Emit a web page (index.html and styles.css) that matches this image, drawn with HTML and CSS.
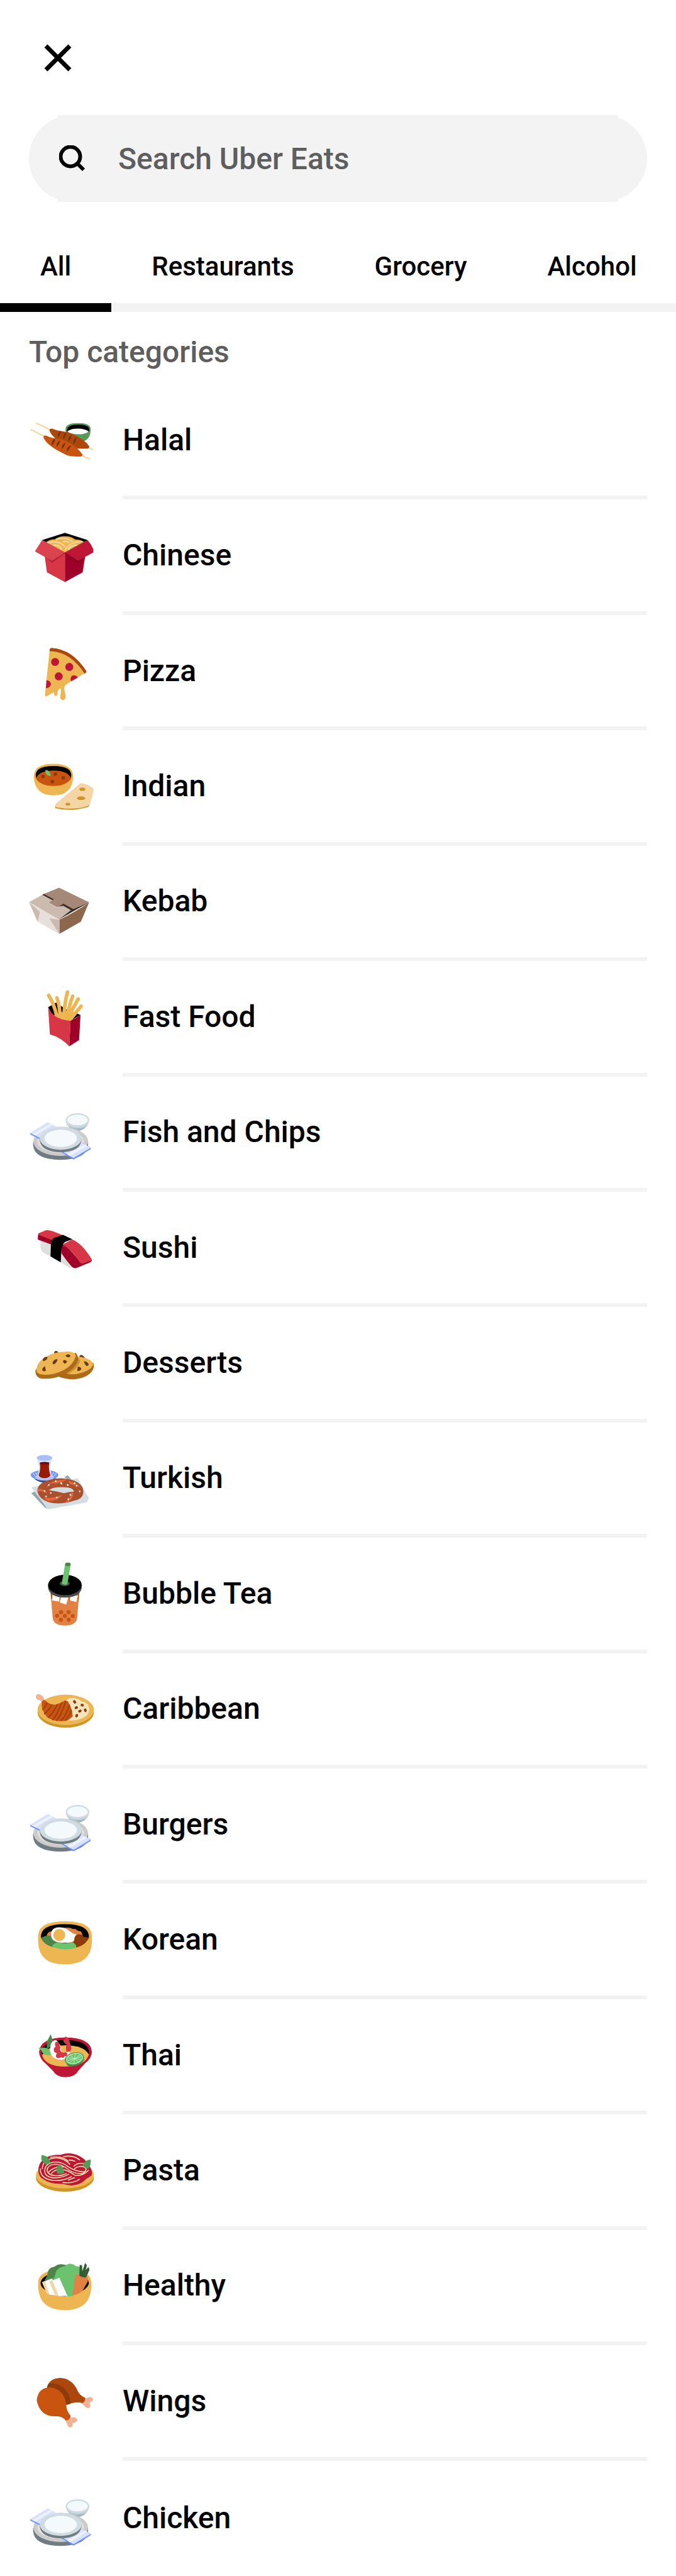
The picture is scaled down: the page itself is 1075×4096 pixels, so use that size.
FILE: index.html
```html
<!DOCTYPE html>
<html lang="en">
<head>
<meta charset="utf-8">
<meta name="viewport" content="width=device-width, initial-scale=1">
<title>Search Uber Eats</title>
<link rel="stylesheet" href="styles.css">
</head>
<body>
<svg class="sprite" aria-hidden="true">
  <symbol id="plate" viewBox="144 126 324 324">
    <path d="M332 232 Q334 262 367 278 Q386 284 405 278 Q440 262 444 232z" fill="#a3b7c1"/>
    <path d="M328 226 Q330 252 350 262 Q388 275 425 262 Q444 250 445 226z" fill="#c3d2d9"/>
    <ellipse cx="387" cy="226" rx="59" ry="34" fill="#d1dde3"/>
    <ellipse cx="387" cy="226" rx="51" ry="26" fill="#f4fafb"/>
    <path d="M165 335 V352 Q170 424 302 426 Q434 424 440 352 V335z" fill="#717c82"/>
    <ellipse cx="303" cy="333" rx="137" ry="73" fill="#cbcbcb"/>
    <ellipse cx="303" cy="333" rx="117" ry="58" fill="#e2dfde"/>
    <path d="M150 291 V298 L210 328 V318z" fill="#6d93fa"/>
    <path d="M150 291 L238 237 L300 270 L210 321z" fill="#d9e2fd"/>
    <path d="M163 297 L252 245 L263 251 L175 303z" fill="#eff2fe"/>
    <path d="M300 383 L367 424 L453 372 V364 L390 330z" fill="#6d93fa"/>
    <path d="M300 378 L367 416 L453 365 L400 335z" fill="#d9e2fd"/>
    <path d="M335 398 L424 348 L436 355 L350 407z" fill="#eff2fe"/>
    <path d="M198 318 V330 Q208 386 303 388 Q398 386 407 330 V318z" fill="#717c82"/>
    <ellipse cx="303" cy="318" rx="105" ry="57" fill="#d0dce2"/>
    <ellipse cx="303" cy="318" rx="81" ry="43" fill="#f4fafb"/>
  </symbol>
</svg>

<div class="page">
  <header class="topbar">
    <button class="close" type="button" aria-label="Close">
      <svg viewBox="0 0 46 46" aria-hidden="true"><path d="M4 4 L42 42 M42 4 L4 42" fill="none" stroke="#000" stroke-width="7"/></svg>
    </button>
  </header>

  <form class="search" role="search">
    <svg class="search-icon" viewBox="0 0 42 42" aria-hidden="true"><circle cx="18" cy="18" r="15.500" fill="none" stroke="#000" stroke-width="6"/><path d="M29 29 L39 39" stroke="#000" stroke-width="6"/></svg>
    <input class="search-input" type="search" placeholder="Search Uber Eats" aria-label="Search Uber Eats">
  </form>

  <nav class="tabs" role="tablist" aria-label="Search filters">
    <button class="tab tab-active" type="button" role="tab" aria-selected="true">All</button>
    <button class="tab" type="button" role="tab" aria-selected="false">Restaurants</button>
    <button class="tab" type="button" role="tab" aria-selected="false">Grocery</button>
    <button class="tab" type="button" role="tab" aria-selected="false">Alcohol</button>
  </nav>

  <h2 class="heading">Top categories</h2>

  <ul class="list">
    <li><a class="row" href="#halal">
      <svg class="icon" viewBox="144 114 324 324" aria-hidden="true">
        <path d="M327 222 Q327 192 390 192 Q453 192 453 222 Q453 287 390 287 Q327 287 327 222z" fill="#569a58"/>
        <path d="M333 234 Q333 199 389 199 Q446 199 446 226 L443 236z" fill="#000"/>
        <path d="M336 233 Q355 219 389 219 Q425 219 443 234 Q425 248 389 248 Q352 248 336 233z" fill="#fff"/>
        <path d="M181 192 L463 324 M155 225 L446 372" fill="none" stroke="#f9d6a0" stroke-width="7" stroke-linecap="round"/>
        <path d="M246 228 Q248 218 262 220 Q280 229 306 232 Q335 234 362 246 Q425 275 446 308 Q446 319 435 319 Q380 325 335 305 Q262 270 246 228z" fill="#ad480c"/>
        <path d="M216 262 Q219 252 232 255 Q250 265 280 269 Q318 272 350 293 Q385 310 412 349 Q411 359 400 359 Q355 360 335 353 Q230 305 216 262z" fill="#c95410"/>
        <g fill="#72330f">
          <path d="M308 233 Q284 236 289 265 Q297 254 308 233z"/><path d="M332 240 Q311 249 316 275 Q326 262 332 240z"/><path d="M359 251 Q337 261 341 286 Q353 274 359 251z"/><path d="M384 263 Q362 272 367 299 Q378 286 384 263z"/>
          <path d="M277 269 Q254 276 259 305 Q271 293 277 269z"/><path d="M302 278 Q278 285 283 311 Q295 299 302 278z"/><path d="M328 289 Q305 297 309 324 Q321 311 328 289z"/><path d="M355 303 Q330 310 334 336 Q346 325 355 303z"/>
        </g>
      </svg>
      <span class="label">Halal</span></a></li>

    <li><a class="row" href="#chinese">
      <svg class="icon" viewBox="144 690 324 324" aria-hidden="true">
        <path d="M210 774 L324 738 L438 774 L324 836z" fill="#000"/>
        <path d="M230 784 Q250 770 274 770 Q295 754 324 755 Q355 754 376 772 Q402 770 419 783 L324 836z" fill="#eeb653"/>
        <g fill="none" stroke="#f7d89d" stroke-width="7"><path d="M278 771 Q324 756 362 782 M236 790 Q290 770 325 808 M264 800 Q290 793 308 820 M314 782 Q335 778 346 788 M325 827 Q345 780 412 783 M341 824 Q350 800 385 799"/></g>
        <path d="M222 850 L324 836 V984 L234 935z" fill="#d63645"/>
        <path d="M426 850 L324 836 V984 L413 935z" fill="#9f0029"/>
        <path d="M224 856 L260 888 L324 840 V836z" fill="#af2236"/><path d="M425 856 L388 887 L324 840 V836z" fill="#800020"/>
        <path d="M210 774 L324 836 L259 878 L174 831z" fill="#dc4350"/>
        <path d="M438 774 L324 836 L389 878 L466 836 V820 Q456 795 438 774z" fill="#be1736"/>
      </svg>
      <span class="label">Chinese</span></a></li>

    <li><a class="row" href="#pizza">
      <svg class="icon" viewBox="144 126 324 324" aria-hidden="true">
        <path d="M247 188 Q350 190 420 302 L330 357 Q320 364 321 378 Q322 392 327 408 Q330 434 314 435 Q299 434 301 412 Q305 395 304 379 Q299 371 288 390 Q287 400 287 408 Q283 415 276 414 Q269 412 269 398 Q266 397 262 399 L231 416 Q224 418 224 410z" fill="#eeb653"/>
        <path d="M247 190 L248 181 Q249 174 258 174 Q362 181 432 291 Q433 296 422 303 Q350 192 247 190z" fill="#ad480c"/>
        <g fill="#be1736"><circle cx="275" cy="244" r="20"/><circle cx="346" cy="269" r="20"/><circle cx="293" cy="316" r="20"/><path d="M232 335 Q253 337 254 355 Q252 374 229 375z"/><path d="M356 341 Q346 324 361 312 Q378 308 389 322z"/></g>
      </svg>
      <span class="label">Pizza</span></a></li>

    <li><a class="row" href="#indian">
      <svg class="icon" viewBox="144 702 324 324" aria-hidden="true">
        <path d="M168 820 Q167 754 267 754 Q366 754 366 820 Q360 912 267 912 Q174 912 168 820z" fill="#eeb653"/>
        <path d="M180 825 Q165 765 267 765 Q369 765 354 825 Q340 860 267 860 Q194 860 180 825z" fill="#000"/>
        <path d="M180 825 Q197 788 267 788 Q337 788 354 825 Q335 865 267 865 Q199 865 180 825z" fill="#c95410"/>
        <g fill="#8e3b0c"><circle cx="214" cy="817" r="9"/><circle cx="276" cy="805" r="9"/><circle cx="316" cy="824" r="9"/><circle cx="261" cy="843" r="9"/></g>
        <path d="M225 786 Q248 782 253 813 Q230 820 225 786z" fill="#6cc36e"/>
        <path d="M275 962 V976 Q350 996 440 970 Q446 965 448 954z" fill="#cc9526"/>
        <path d="M402 851 Q435 852 468 879 Q464 915 448 957 Q438 970 390 976 Q325 982 276 969 V955z" fill="#f5d5a4"/>
        <g fill="#cc9526"><ellipse cx="411" cy="881" rx="15" ry="8"/><ellipse cx="405" cy="926" rx="21" ry="9"/><ellipse cx="339" cy="956" rx="12" ry="7"/></g>
      </svg>
      <span class="label">Indian</span></a></li>

    <li><a class="row" href="#kebab">
      <svg class="icon" viewBox="144 138 324 324" aria-hidden="true">
        <path d="M214 264 L295 231 L445 304 L362 338 L318 320 L285 328 L245 306 L255 290z" fill="#a58877"/>
        <path d="M145 303 L214 265 L265 292 L247 301 Q245 306 252 312 L285 329 L318 319 L357 341 L296 391z" fill="#cbbab0"/>
        <path d="M218 262 L268 288 L263 294 L212 267z M294 324 L317 311 L362 336 L370 339 L356 344 L316 321z" fill="#3c2c26"/>
        <path d="M296 389 L357 341 L445 304z" fill="#3c2c26"/>
        <path d="M296 391 Q375 354 445 304 L404 401 L296 462z" fill="#8c664d"/>
        <path d="M145 304 L296 391 V462 L185 399z" fill="#e7dfda"/>
        <path d="M145 304 L199 352 L188 400z M246 384 L296 391 V462z" fill="#cbbab0"/>
      </svg>
      <span class="label">Kebab</span></a></li>

    <li><a class="row" href="#fast-food">
      <svg class="icon" viewBox="144 714 324 324" aria-hidden="true">
        <path d="M240 829 L280 806 L330 840 L402 867 L352 897 L260 865z" fill="#000"/>
        <path d="M270 835 L290 872 L300 850 L322 858 L335 840 L386 860 Q372 880 354 898 Q310 898 278 870z" fill="#eeb653"/>
        <g fill="none" stroke="#eeb653" stroke-width="18" stroke-linecap="round"><path d="M243 770 Q270 810 285 880 M284 782 Q298 820 300 880 M337 753 Q322 805 319 880 M363 774 Q350 805 336 870 M390 788 L345 870 M405 824 L358 880"/></g>
        <path d="M240 829 Q265 890 352 897 L346 1025 Q305 980 249 965z" fill="#d63645"/>
        <path d="M352 897 Q376 886 402 867 L395 993 L346 1025z" fill="#9f0029"/>
      </svg>
      <span class="label">Fast Food</span></a></li>

    <li><a class="row" href="#fish-and-chips">
      <svg class="icon" aria-hidden="true"><use href="#plate"/></svg>
      <span class="label">Fish and Chips</span></a></li>

    <li><a class="row" href="#sushi">
      <svg class="icon" viewBox="144 726 324 324" aria-hidden="true">
        <g transform="scale(1.0714 1)">
          <path d="M188 850 L236 870 V932 Q188 915 188 885z M284 910 L300 915 L338 992 Q315 988 284 962z" fill="#dedede"/>
          <path d="M178 818 Q176 835 176 849 L242 875 L255 845z" fill="#9f0029"/>
          <path d="M178 818 L213 802 Q225 799 248 808 L298 829 L242 851 L181 826z" fill="#d63645"/>
          <path d="M286 880 L300 868 L382 968 L428 948 Q430 956 422 962 L356 991 Q343 994 335 985 Q310 955 286 917z" fill="#9f0029"/>
          <path d="M290 875 L336 848 Q385 870 428 948 Q427 953 420 956 L385 970 Q375 970 369 958 Q330 892 290 875z" fill="#d63645"/>
          <path d="M237 870 Q237 849 252 840 L294 825 L337 847 L305 860 Q287 870 285 915 L283 963 L235 933z" fill="#000"/>
        </g>
      </svg>
      <span class="label">Sushi</span></a></li>

    <li><a class="row" href="#desserts">
      <svg class="icon" viewBox="144 102 324 324" aria-hidden="true">
        <path d="M397 228 Q408 216 423 236 V250 H395z" fill="#6b3b0e"/>
        <path d="M468 264 V285 Q455 335 370 345 Q330 346 288 330 L380 235z" fill="#ad6b18"/>
        <path d="M385 231 Q450 236 466 268 Q458 302 385 318 Q345 323 310 312z" fill="#eeb653"/>
        <path d="M388 233 L400 248 Q397 280 360 306 Q325 332 300 332 L288 330z" fill="#a06a1b" opacity=".45"/>
        <path d="M271 207 Q280 197 292 210 L288 220 H270z" fill="#6b3b0e"/>
        <path d="M180 293 L176 305 Q178 335 205 341 Q260 346 310 326 Q385 290 391 240 Q388 222 378 212z" fill="#ad6b18"/>
        <path d="M182 302 Q180 255 240 226 Q290 204 345 206 Q380 210 378 230 Q365 275 315 300 Q255 330 200 319 Q185 315 182 302z" fill="#eeb653"/>
        <g fill="#6b3b0e"><path d="M213 246 Q222 228 237 234 Q238 246 219 254 Q213 254 213 246z"/><path d="M262 262 Q268 243 286 244 Q290 250 275 266 Q264 275 262 262z"/><path d="M326 226 Q345 213 351 227 Q351 236 336 234z"/><path d="M315 251 Q326 244 335 256 Q330 268 322 266 Q314 262 315 251z"/><path d="M224 279 Q209 288 211 300 Q220 309 229 300z"/><path d="M418 256 Q435 252 443 271 Q440 282 428 275z"/><path d="M388 283 Q402 280 406 294 Q400 304 386 303z"/></g>
      </svg>
      <span class="label">Desserts</span></a></li>

    <li><a class="row" href="#turkish">
      <svg class="icon" viewBox="144 678 324 324" aria-hidden="true">
        <path d="M156 915 L175 905 L238 995 L222 985z M320 835 L338 825 L360 850z" fill="#95a5ae"/>
        <path d="M156 886 L240 870 L388 840 L444 940 L433 961 L240 996z" fill="#d2dee4"/>
        <path d="M165 835 Q185 860 222 862 Q258 860 280 838z" fill="#26479b"/>
        <ellipse cx="222" cy="824" rx="69" ry="25" fill="#7294f4"/>
        <g stroke="#c0cffd" stroke-width="5"><path d="M164 815 L174 828 M176 810 L184 822 M281 815 L270 828 M268 810 L260 822"/></g>
        <ellipse cx="222" cy="835" rx="48" ry="17" fill="#b3c5fb"/>
        <path d="M184 740 L195 785 L186 830 Q222 850 258 830 L249 785 L260 740z" fill="#d9e2fd"/>
        <ellipse cx="222" cy="738" rx="39" ry="14" fill="#a9bff8"/>
        <path d="M198 765 Q222 756 246 765 Q240 795 252 826 Q245 839 222 840 Q199 839 192 826 Q205 795 198 765z" fill="#981b06"/>
        <ellipse cx="222" cy="764" rx="24" ry="6" fill="#64110a"/>
        <path fill-rule="evenodd" d="M186 900 Q190 862 250 847 Q310 832 365 850 Q415 868 416 905 Q418 940 375 951 Q310 972 255 963 Q190 948 186 900z M244 900 Q285 905 319 915 Q345 908 369 907 Q365 882 300 885 Q260 885 244 900z" fill="#a9502e"/>
        <g fill="#e2673d"><path d="M232 893 Q230 862 290 850 Q330 846 340 841 Q310 868 258 866 Q240 872 232 893z"/><path d="M340 852 Q385 862 410 893 Q392 875 350 870z"/><path d="M189 893 Q215 890 240 918 Q205 900 188 906z"/><path d="M214 936 Q255 945 312 922 Q290 955 240 955z"/><path d="M365 908 Q372 935 338 961 L320 964 Q350 945 355 915z"/></g>
        <g stroke="#f8ebdd" stroke-width="8" stroke-linecap="round"><path d="M243 874h1 M278 855h1 M305 864l2 3 M337 873l2 1 M372 866l1-2 M382 878h1 M398 905v1 M222 904h1 M253 914h1 M283 937h1 M229 931h1 M351 923h1 M341 945h1"/></g>
      </svg>
      <span class="label">Turkish</span></a></li>

    <li><a class="row" href="#bubble-tea">
      <svg class="icon" viewBox="144 144 324 324" aria-hidden="true">
        <path d="M252 300 H396 L385 430 Q380 467 324 467 Q268 467 263 430z" fill="#e18244"/>
        <path d="M252 304 L266 312 L257 342z M396 304 L380 314 L391 345z M296 326 L303 320 L300 345z M340 326 L350 320 L347 345z" fill="#c95410"/>
        <path d="M262 312 L298 325 L295 347 L259 341z M304 326 L342 326 L330 363 L298 352z M350 322 L390 316 L381 349 L349 341z" fill="#fff"/>
        <g fill="#c95410"><circle cx="305" cy="400" r="10"/><circle cx="343" cy="400" r="10"/><circle cx="285" cy="418" r="10"/><circle cx="324" cy="419" r="10"/><circle cx="363" cy="419" r="10"/><circle cx="304" cy="438" r="10"/><circle cx="343" cy="438" r="10"/></g>
        <path d="M240 263 V280 Q250 327 324 327 Q398 327 408 280 V263z" fill="#4a4a4a"/>
        <ellipse cx="324" cy="264" rx="84" ry="51" fill="#000"/>
        <ellipse cx="323" cy="257" rx="26" ry="13" fill="#4a4a4a"/>
        <path d="M325 160 L353 163 L336 260 Q322 268 308 258z" fill="#6cc36e"/>
        <ellipse cx="339" cy="161" rx="14" ry="9" fill="#4d8549"/>
      </svg>
      <span class="label">Bubble Tea</span></a></li>

    <li><a class="row" href="#caribbean">
      <svg class="icon" viewBox="144 720 324 324" aria-hidden="true">
        <ellipse cx="328" cy="898" rx="141" ry="77" fill="#cc9526"/>
        <ellipse cx="328" cy="886" rx="141" ry="76" fill="#eeb653"/>
        <path d="M328 838 Q350 822 375 828 Q395 832 405 842 Q445 850 446 885 Q440 940 335 940z" fill="#f6e4bb"/>
        <path d="M178 820 Q183 804 198 808 Q215 815 222 836 L208 850 Q205 836 190 836 Q180 834 178 820z" fill="#efb393"/>
        <path d="M208 848 Q212 835 225 838 Q245 860 275 860 Q300 855 318 842 Q328 834 339 844 Q360 875 363 918 Q340 945 310 942 Q265 945 235 922 Q205 890 208 848z" fill="#c95410"/>
        <g fill="none" stroke="#94400f" stroke-width="6"><path d="M234 850 Q227 872 211 885 M258 860 Q245 885 220 908 M286 858 Q272 895 239 925 M307 850 Q292 900 262 938 M327 843 Q315 895 282 941 M347 860 Q335 910 304 941 M357 886 Q348 915 325 940"/></g>
        <g stroke="#8e3b0c" stroke-width="13" stroke-linecap="round"><path d="M371 844l3 4 M409 862l3 1 M379 876l4-2 M397 893l4-2 M425 886l2 4 M384 913l-2 4"/></g>
      </svg>
      <span class="label">Caribbean</span></a></li>

    <li><a class="row" href="#burgers">
      <svg class="icon" aria-hidden="true"><use href="#plate"/></svg>
      <span class="label">Burgers</span></a></li>

    <li><a class="row" href="#korean">
      <svg class="icon" viewBox="144 702 324 324" aria-hidden="true">
        <path d="M190 845 Q190 771 324 771 Q459 771 459 845 V875 Q455 987 324 987 Q194 987 190 875z" fill="#eeb653"/>
        <path d="M204 852 Q200 785 324 785 Q448 785 444 852 Q440 880 324 890 Q210 880 204 852z" fill="#000"/>
        <path d="M232 845 Q240 818 262 822 Q310 798 352 804 Q365 812 375 809 Q390 822 405 822 Q412 835 414 850 L390 880 H240z" fill="#e18244"/>
        <path d="M204 853 Q235 838 265 845 L290 880 L262 901 Q215 885 204 853z" fill="#4d8549"/>
        <path d="M372 858 Q372 836 395 836 Q410 836 418 849 Q432 850 444 853 Q430 890 380 903 L365 875z" fill="#8e3b0c"/>
        <path d="M255 843 Q252 802 295 801 Q325 800 347 820 Q365 835 383 837 Q368 850 370 869 Q355 880 320 878 Q258 880 255 843z" fill="#fff"/>
        <circle cx="296" cy="840" r="30" fill="#eeb653"/>
        <path d="M257 898 Q275 870 310 879 Q330 884 350 876 Q380 875 382 903 Q320 922 257 898z" fill="#6cc36e"/>
      </svg>
      <span class="label">Korean</span></a></li>

    <li><a class="row" href="#thai">
      <svg class="icon" viewBox="144 108 324 324" aria-hidden="true">
        <path d="M195 255 Q200 183 327 183 Q454 183 459 255 Q459 285 425 312 L390 350 Q375 381 326 381 Q282 381 265 350 L226 312 Q195 285 195 255z" fill="#be1736"/>
        <path d="M207 265 Q205 195 327 195 Q449 195 445 265z" fill="#000"/>
        <path d="M210 272 Q235 222 327 222 Q420 222 444 268 Q425 328 327 328 Q228 328 210 272z" fill="#eeb653"/>
        <path d="M253 167 Q240 190 234 206 L233 240 Q262 230 263 198z" fill="#4d8549"/>
        <path d="M189 234 Q210 236 220 234 Q248 232 255 270 Q215 278 206 247z" fill="#6cc36e"/>
        <path d="M250 245 Q250 195 280 195 L300 220 L308 260 L347 252 Q352 292 300 294 Q252 290 250 245z" fill="#fff"/>
        <path d="M278 205 Q295 202 297 220 Q304 232 300 244 Q305 260 320 258 Q330 252 337 265 Q336 277 323 276 Q315 290 305 281 Q290 292 280 280 Q277 270 284 262 Q265 255 269 243 Q268 232 278 230 Q270 215 278 205z" fill="#d63645"/>
        <path d="M324 177 L341 184 L350 212 Q360 240 351 252 L332 255 Q326 235 333 218 Q316 210 316 194 L326 192z" fill="#d63645"/>
        <path d="M326 295 Q332 325 345 327 Q400 330 420 295 V280z" fill="#4d8549"/>
        <ellipse cx="371" cy="288" rx="49" ry="31" transform="rotate(-14 371 288)" fill="#569a58"/>
        <ellipse cx="372" cy="288" rx="41" ry="25" transform="rotate(-14 372 288)" fill="#6cc36e" stroke="#b9edbb" stroke-width="4"/>
        <path d="M337 299 L408 277 M350 271 L395 306 M376 262 L368 314 M338 284 L408 293 M401 268 L347 309" stroke="#b9edbb" stroke-width="3"/>
      </svg>
      <span class="label">Thai</span></a></li>

    <li><a class="row" href="#pasta">
      <svg class="icon" viewBox="144 684 324 324" aria-hidden="true">
        <ellipse cx="324" cy="882" rx="145" ry="69" fill="#cc9526"/>
        <ellipse cx="324" cy="868" rx="145" ry="67" fill="#eeb653"/>
        <path d="M191 840 Q195 790 250 772 Q280 764 300 767 Q350 750 395 772 Q425 788 435 805 Q470 850 455 872 Q430 885 410 905 Q365 930 315 912 Q250 915 215 888 Q190 875 191 840z" fill="#be1736"/>
        <g fill="none" stroke="#f8dfae" stroke-width="5">
          <path d="M201 835 Q198 885 265 895 Q320 898 358 875"/>
          <path d="M211 838 Q210 795 265 784 Q310 774 350 815"/>
          <path d="M250 780 Q310 768 342 800"/>
          <path d="M223 845 Q225 808 275 803 Q310 802 340 826 Q385 855 425 850 Q440 830 405 824 Q385 825 370 838"/>
          <path d="M234 845 Q238 816 275 814 Q300 814 318 826"/>
          <path d="M223 845 Q222 882 280 882 Q315 880 345 863"/>
          <path d="M234 845 Q240 868 275 871 Q310 872 332 860"/>
          <path d="M240 855 Q275 820 325 828 Q360 860 400 861 Q425 862 429 842"/>
          <path d="M255 861 Q280 835 310 838 Q350 850 372 868 Q410 878 443 843"/>
          <path d="M315 777 Q365 765 399 793 M343 793 Q360 792 376 800 M368 825 Q385 805 420 810"/>
          <path d="M312 905 Q365 912 398 888 M340 894 Q360 886 374 880"/>
        </g>
        <g fill="#569a58"><path d="M208 767 Q245 770 251 806 Q240 815 232 815 Q198 800 208 767z"/><path d="M294 813 Q320 830 321 858 Q305 865 285 860 Q275 835 294 813z"/><path d="M453 790 Q456 820 440 837 Q425 835 411 818 Q425 792 453 790z"/></g>
      </svg>
      <span class="label">Pasta</span></a></li>

    <li><a class="row" href="#healthy">
      <svg class="icon" viewBox="144 120 324 324" aria-hidden="true">
        <g transform="scale(1 1.104)">
          <path d="M190 240 Q190 182 324 182 Q456 182 456 240 V262 Q450 366 324 366 Q196 366 190 262z" fill="#eeb653"/>
          <path d="M202 245 Q204 197 324 195 Q440 197 444 245 Q435 285 324 303 Q205 285 202 245z" fill="#000"/>
          <path d="M221 232 Q235 215 238 195 Q245 172 270 170 Q295 150 332 162 L300 240z" fill="#4d8549"/>
          <path d="M262 230 Q275 215 278 195 Q288 172 322 167 Q350 144 380 167 Q395 166 402 172 L425 240 L362 303 H330z" fill="#6cc36e"/>
          <path d="M210 239 L260 222 L300 301 L245 295 Q225 280 210 239z" fill="#fff"/>
          <path d="M210 240 L223 234 L247 296 L233 291z M245 236 L260 230 L293 301 H277z" fill="#f5d5a4"/>
          <path d="M262 231 L296 219 L337 302 H293z" fill="#fff"/>
          <path d="M375 212 Q380 200 397 203 L432 212 Q442 220 438 237 L411 280 Q390 296 362 298z" fill="#e18244"/>
          <path d="M398 161 L410 163 L411 190 L425 152 L434 162 L428 184 L442 170 L447 183 L431 216 Q415 221 396 210z" fill="#355c35"/>
        </g>
      </svg>
      <span class="label">Healthy</span></a></li>

    <li><a class="row" href="#wings">
      <svg class="icon" viewBox="144 696 324 324" aria-hidden="true">
        <g transform="scale(1 1.104)">
          <path d="M415 765 L436 764 Q450 755 463 765 Q468 779 452 783 L446 786 Q455 798 448 807 Q435 814 424 803 L405 786z M342 848 L355 854 Q373 846 386 860 Q388 874 371 876 L361 878 Q368 890 355 897 Q338 899 336 884 L322 858z" fill="#efb393"/>
          <path d="M234 717 Q245 675 300 673 Q355 675 383 722 Q395 752 425 763 Q427 780 412 787 Q375 778 332 796z" fill="#ad480c"/>
          <path d="M234 717 L240 702 Q275 690 318 718 Q350 745 353 790 L330 796z" fill="#8e3b0c"/>
          <path d="M183 775 Q190 718 248 716 Q318 722 331 793 Q330 822 353 845 Q352 864 328 866 Q310 845 278 847 Q200 850 183 775z" fill="#c95410"/>
        </g>
      </svg>
      <span class="label">Wings</span></a></li>

    <li><a class="row" href="#chicken">
      <svg class="icon" aria-hidden="true"><use href="#plate"/></svg>
      <span class="label">Chicken</span></a></li>
  </ul>
</div>
</body>
</html>
```
FILE: styles.css
```css
* { box-sizing: border-box; }

body {
  margin: 0;
  background: #fff;
  color: #000;
  font-family: Roboto, "Liberation Sans", sans-serif;
  font-size: 48px;
  font-weight: 500;
}

.sprite {
  display: block;
  width: 0;
  height: 0;
}

.page {
  display: flex;
  flex-direction: column;
  min-height: 100vh;
}

.topbar {
  display: flex;
  align-items: center;
  height: 183px;
  padding: 0 46px;
}

.close {
  display: flex;
  align-items: center;
  justify-content: center;
  width: 92px;
  height: 92px;
  padding: 0;
  border: 0;
  background: none;
}

.close svg {
  width: 46px;
  height: 46px;
}

.search {
  position: relative;
  display: flex;
  align-items: center;
  gap: 52px;
  height: 138px;
  margin: 0 46px;
  padding: 0 48px;
  border-radius: 69px;
  background: #f3f3f3;
}

/* Square middle section between the rounded end caps */
.search::before {
  content: "";
  position: absolute;
  inset: 0 46px;
  background: #f3f3f3;
}

.search-icon {
  position: relative;
  flex: none;
  width: 42px;
  height: 42px;
}

.search-input {
  position: relative;
  flex: 1;
  min-width: 0;
  height: 60px;
  padding: 0;
  border: 0;
  outline: 0;
  appearance: none;
  background: none;
  color: #000;
  font: inherit;
}

.search-input::placeholder {
  color: #5e5e5e;
  opacity: 1;
}

.tabs {
  display: flex;
  overflow: hidden;
  padding-top: 45px;
  box-shadow: inset 0 -14px #f3f3f3;
}

.tab {
  flex: none;
  padding: 32px 64px;
  border: 0;
  border-bottom: 14px solid transparent;
  background: none;
  color: #000;
  font: inherit;
  font-size: 42px;
  line-height: 52px;
}

.tab-active { border-bottom-color: #000; }

.heading {
  margin: 0;
  padding: 34px 46px 21px;
  color: #5e5e5e;
  font-size: 48px;
  font-weight: 500;
  line-height: 60px;
}

.list {
  display: grid;
  flex: 1;
  grid-auto-rows: minmax(183px, 1fr);
  margin: 0;
  padding: 0 46px;
  list-style: none;
}

.list li { display: grid; }

.row {
  display: grid;
  grid-template-columns: 103px 1fr;
  column-gap: 46px;
  align-items: center;
  color: #000;
  text-decoration: none;
}

.list li:not(:last-child) .row {
  background: linear-gradient(#f3f3f3, #f3f3f3) 149px 100% / 100% 6px no-repeat;
  padding-bottom: 6px;
}

.icon {
  display: block;
  width: 103px;
  height: 103px;
}

.label { line-height: 60px; }
```
